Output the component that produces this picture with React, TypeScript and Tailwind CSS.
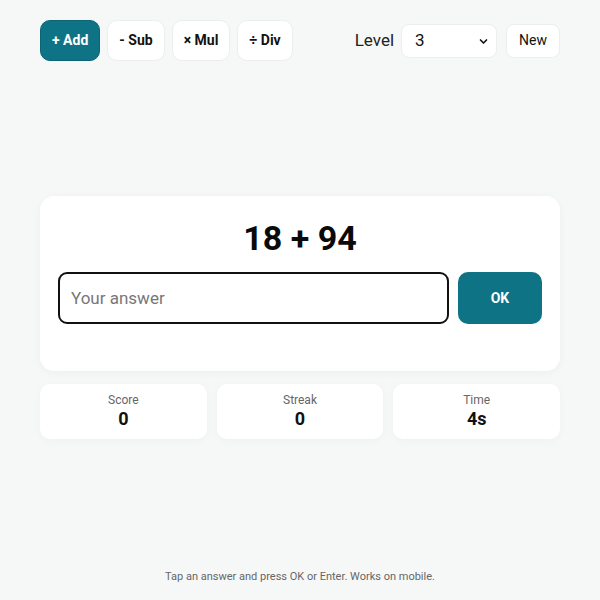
import React, { useState } from "react";

const ops = [
  { key: "add", label: "+ Add" },
  { key: "sub", label: "- Sub" },
  { key: "mul", label: "× Mul" },
  { key: "div", label: "÷ Div" },
];

export default function App() {
  const [op, setOp] = useState("add");
  const [level, setLevel] = useState("3");
  const [answer, setAnswer] = useState("");

  const stats = [
    { label: "Score", value: "0" },
    { label: "Streak", value: "0" },
    { label: "Time", value: "4s" },
  ];

  return (
    <div
      className="flex h-screen flex-col bg-[#f6f8f8] px-10 pt-5 pb-[15px] text-[#111]"
      style={{ fontFamily: "Roboto, 'Noto Sans', sans-serif" }}
    >
      <header className="flex items-center justify-between">
        <div className="flex gap-[7px]">
          {ops.map((o) => (
            <button
              key={o.key}
              onClick={() => setOp(o.key)}
              className={`h-[41px] rounded-[10px] px-[11px] text-[14px] font-bold ${
                op === o.key
                  ? "border border-[#0b6575] bg-[#0f7386] text-white"
                  : "border border-[#eceeee] bg-white text-[#111]"
              }`}
            >
              {o.label}
            </button>
          ))}
        </div>
        <div className="flex items-center gap-[9px]">
          <span className="mr-[-2px] text-[17px] text-[#222]">Level</span>
          <div className="relative">
            <select
              value={level}
              onChange={(e) => setLevel(e.target.value)}
              className="h-[34px] w-[96px] appearance-none rounded-[8px] border border-[#eceeee] bg-white pl-[13px] text-[17px] text-[#111] outline-none"
            >
              {["1", "2", "3", "4", "5"].map((l) => (
                <option key={l}>{l}</option>
              ))}
            </select>
            <svg
              viewBox="0 0 12 12"
              className="pointer-events-none absolute top-[13px] right-[9px] h-[9px] w-[9px]"
            >
              <path d="M2 4l4 4 4-4" fill="none" stroke="#111" strokeWidth="2.2" strokeLinecap="round" strokeLinejoin="round" />
            </svg>
          </div>
          <button className="h-[34px] rounded-[8px] border border-[#eceeee] bg-white px-3 text-[14px] text-[#111]">
            New
          </button>
        </div>
      </header>

      <main className="flex flex-1 flex-col justify-center pt-[6px]">
        <div className="rounded-[14px] bg-white px-[18px] pt-[20px] pb-[47px] shadow-[0_2px_10px_rgba(0,0,0,0.04)]">
          <div className="text-center text-[34px] leading-[44px] font-bold text-[#0a0a0a]">18 + 94</div>
          <div className="mt-[12px] flex gap-[9px]">
            <input
              value={answer}
              onChange={(e) => setAnswer(e.target.value)}
              placeholder="Your answer"
              className="h-[52px] flex-1 rounded-[9px] border-2 border-[#111] bg-white px-[11px] text-[17px] outline-none placeholder:text-[#777]"
            />
            <button className="h-[52px] w-[84px] rounded-[10px] bg-[#0f7386] text-[14px] font-bold text-white">
              OK
            </button>
          </div>
        </div>

        <div className="mt-[13px] grid grid-cols-3 gap-[10px]">
          {stats.map((s) => (
            <div
              key={s.label}
              className="flex h-[55px] flex-col items-center justify-center rounded-[10px] bg-white shadow-[0_2px_8px_rgba(0,0,0,0.03)]"
            >
              <span className="text-[12px] leading-[15px] text-[#666]">{s.label}</span>
              <span className="text-[18px] leading-[22px] font-bold">{s.value}</span>
            </div>
          ))}
        </div>
      </main>

      <footer className="text-center text-[11px] text-[#666]">
        Tap an answer and press OK or Enter. Works on mobile.
      </footer>
    </div>
  );
}
